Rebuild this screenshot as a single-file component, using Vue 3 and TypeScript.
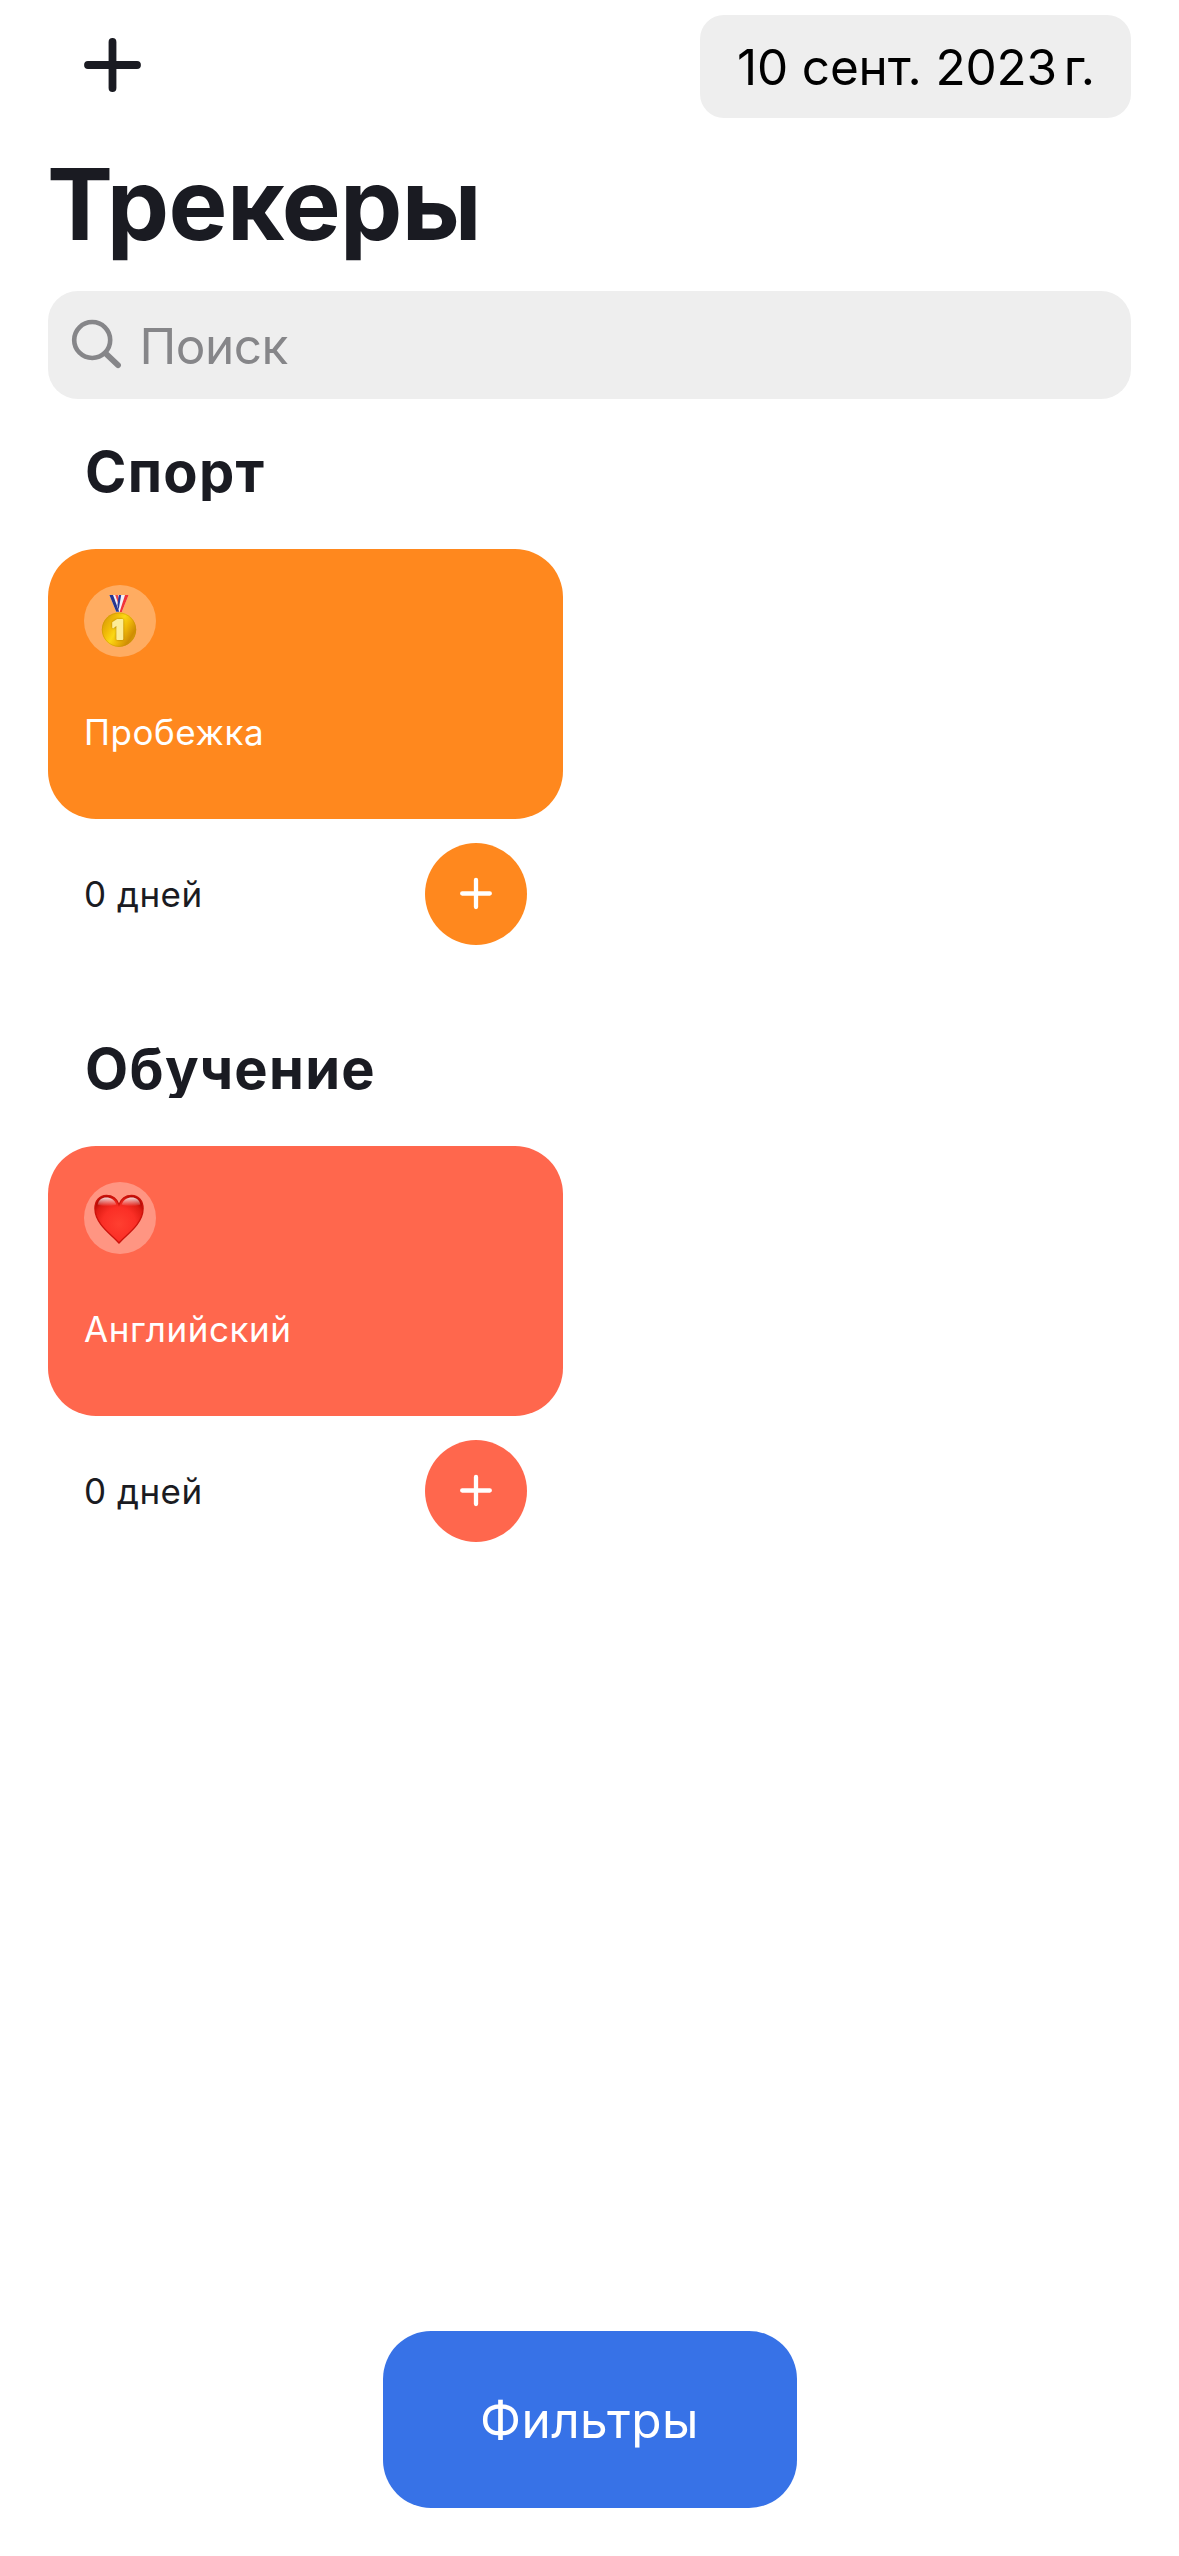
<script setup lang="ts">
interface Tracker {
  id: number
  name: string
  kind: 'medal' | 'heart'
  color: string
  days: string
}

interface Category {
  title: string
  trackers: Tracker[]
}

const categories: Category[] = [
  {
    title: 'Спорт',
    trackers: [{ id: 1, name: 'Пробежка', kind: 'medal', color: '#ff881e', days: '0 дней' }],
  },
  {
    title: 'Обучение',
    trackers: [{ id: 2, name: 'Английский', kind: 'heart', color: '#ff674d', days: '0 дней' }],
  },
]
</script>

<template>
  <main class="screen">
    <header class="bar">
      <button class="add" aria-label="Добавить">
        <svg width="58" height="56" viewBox="0 0 58 56">
          <path d="M4 28H53M28.5 5V51" stroke="#1a1b22" stroke-width="7.8" stroke-linecap="round" />
        </svg>
      </button>
      <div class="date">10 сент. 2023<span class="thin">&nbsp;</span><span class="year">г.</span></div>
    </header>

    <h1 class="title">Трекеры</h1>

    <div class="search">
      <svg class="lens" width="52" height="52" viewBox="0 0 52 52" fill="none" stroke="#868689">
        <circle cx="22.2" cy="22" r="18" stroke-width="4.6" />
        <path d="M35.6 35.4L48 47.2" stroke-width="5.8" stroke-linecap="round" />
      </svg>
      <span class="placeholder">Поиск</span>
    </div>

    <section v-for="category in categories" :key="category.title" class="category">
      <h2 class="category-title">{{ category.title }}</h2>
      <div class="grid">
        <article v-for="tracker in category.trackers" :key="tracker.id" class="tracker">
          <div class="card" :style="{ backgroundColor: tracker.color }">
            <div class="emoji">
              <svg v-if="tracker.kind === 'medal'" width="72" height="72" viewBox="0 0 72 72">
                <defs>
                  <linearGradient id="gold" x1="0" y1="0.2" x2="1" y2="0.8">
                    <stop offset="0" stop-color="#d79a05" />
                    <stop offset="0.28" stop-color="#f2bd08" />
                    <stop offset="0.45" stop-color="#fbd814" />
                    <stop offset="0.62" stop-color="#f0b908" />
                    <stop offset="0.85" stop-color="#cf8d03" />
                    <stop offset="1" stop-color="#dba60c" />
                  </linearGradient>
                </defs>
                <path d="M25.4 10H44.6L37.8 27H32.2Z" fill="#f4f1f6" />
                <path d="M25.4 10H29L35.2 26.8H32.2Z" fill="#26358f" />
                <path d="M31.2 10H33.8L35.4 15.5L34.4 19Z" fill="#f0474c" />
                <path d="M37.2 10H34.8L33.4 20L34.6 25Z" fill="#2c3a9a" />
                <path d="M41 10H44.6L37.8 27H35.6Z" fill="#f23338" />
                <circle cx="35" cy="44.7" r="17.2" fill="url(#gold)" />
                <circle cx="35" cy="44.7" r="16.7" fill="none" stroke="#c99208" stroke-opacity="0.5" />
                <text x="33.8" y="54" class="digit">1</text>
              </svg>
              <svg v-else width="72" height="72" viewBox="0 0 72 72">
                <defs>
                  <radialGradient id="body" cx="0.5" cy="0.6" r="0.62">
                    <stop offset="0" stop-color="#ff3f30" />
                    <stop offset="0.55" stop-color="#fb2f26" />
                    <stop offset="0.85" stop-color="#e01d14" />
                    <stop offset="1" stop-color="#b90c06" />
                  </radialGradient>
                  <linearGradient id="shine" x1="0" y1="0" x2="0" y2="1">
                    <stop offset="0" stop-color="#fff" stop-opacity="0.85" />
                    <stop offset="1" stop-color="#fff" stop-opacity="0" />
                  </linearGradient>
                </defs>
                <path
                  d="M35 61C29 53.5 10.9 42.5 10.9 26.5C10.9 18.5 15.8 13.3 22.4 13.3C28.3 13.3 33 16.8 35 22.6C37 16.8 41.7 13.3 47.6 13.3C54.2 13.3 59.1 18.5 59.1 26.5C59.1 42.5 41 53.5 35 61Z"
                  fill="url(#body)"
                  stroke="#cc130c"
                  stroke-width="1.3"
                />
                <path d="M13.6 22.5C14.6 17.6 18 15.4 22.2 15.4C27 15.4 30.6 17.6 32.4 22.5C27 24.8 18 24.8 13.6 22.5Z" fill="url(#shine)" />
                <path d="M56.4 22.5C55.4 17.6 52 15.4 47.8 15.4C43 15.4 39.4 17.6 37.6 22.5C43 24.8 52 24.8 56.4 22.5Z" fill="url(#shine)" />
              </svg>
            </div>
            <p class="name">{{ tracker.name }}</p>
          </div>
          <div class="footer">
            <span class="days">{{ tracker.days }}</span>
            <button class="done" :style="{ backgroundColor: tracker.color }" aria-label="Отметить">
              <svg width="102" height="102" viewBox="0 0 102 102">
                <path d="M37.2 50.5H64.8M51 37V64" stroke="#fff" stroke-width="4.3" stroke-linecap="round" />
              </svg>
            </button>
          </div>
        </article>
      </div>
    </section>

    <button class="filters">Фильтры</button>
  </main>
</template>

<style>
body {
  margin: 0;
  background: #fff;
}
</style>

<style scoped>
.screen {
  box-sizing: border-box;
  display: flex;
  flex-direction: column;
  height: 2556px;
  padding: 15px 48px 48px;
  background: #fff;
  color: #1a1b22;
  font-family: Inter, Roboto, sans-serif;
}

button {
  padding: 0;
  border: 0;
  background: none;
  font: inherit;
}

svg {
  display: block;
  fill: none;
}

.bar {
  display: flex;
  justify-content: space-between;
  align-items: flex-start;
  height: 103px;
}

.add {
  margin: 22px 0 0 35.5px;
}

.date {
  box-sizing: border-box;
  width: 431px;
  height: 103px;
  padding: 22px 0 0 37px;
  border-radius: 24px;
  background: #eee;
  color: #000;
  font-size: 49.5px;
  line-height: 60px;
  letter-spacing: -0.16px;
  white-space: nowrap;
}

.thin {
  letter-spacing: -7px;
}

.year {
  letter-spacing: -1.6px;
}

.title {
  margin: 26px 0 0 -1px;
  font-size: 99px;
  font-weight: 700;
  line-height: 120px;
  letter-spacing: -0.65px;
}

.search {
  box-sizing: border-box;
  display: flex;
  align-items: flex-start;
  height: 108px;
  margin-top: 27px;
  padding: 25px 24px 0 22px;
  border-radius: 30px;
  background: #eee;
}

.lens {
  margin-top: 2px;
}

.placeholder {
  margin-left: 17.5px;
  color: #868689;
  font-size: 49.5px;
  line-height: 60px;
  letter-spacing: -0.5px;
}

.category {
  margin-bottom: 95px;
}

.search + .category {
  margin-top: 44px;
}

.category-title {
  overflow: hidden;
  margin: 0 0 48px;
  padding-left: 37px;
  font-size: 56px;
  font-weight: 700;
  line-height: 58px;
  letter-spacing: 1.3px;
}

.grid {
  display: grid;
  grid-template-columns: 515px 515px;
  justify-content: space-between;
}

.card {
  box-sizing: border-box;
  height: 270px;
  padding: 36px 36px 0;
  border-radius: 48px;
}

.emoji {
  width: 72px;
  height: 72px;
  border-radius: 50%;
  background: rgba(255, 255, 255, 0.3);
}

.digit {
  fill: #fdec96;
  stroke: #fdec96;
  stroke-width: 1.8px;
  stroke-linejoin: round;
  font-family: Inter, sans-serif;
  font-size: 25.5px;
  font-weight: 900;
  text-anchor: middle;
  filter: drop-shadow(0 0 1px #a87400);
}

.name {
  margin: 48px 0 0;
  color: #fff;
  font-size: 35px;
  line-height: 54px;
  letter-spacing: 0.55px;
}

.footer {
  display: flex;
  align-items: center;
  justify-content: space-between;
  height: 102px;
  margin-top: 24px;
  padding: 0 36px;
}

.days {
  font-size: 35px;
  line-height: 54px;
  letter-spacing: 0.5px;
}

.done {
  width: 102px;
  height: 102px;
  border-radius: 50%;
}

.filters {
  align-self: center;
  box-sizing: border-box;
  width: 414px;
  height: 177px;
  margin-top: auto;
  border-radius: 48px;
  background: #3772e7;
  color: #fff;
  font-size: 49.5px;
  line-height: 60px;
  letter-spacing: 0.4px;
}
</style>
